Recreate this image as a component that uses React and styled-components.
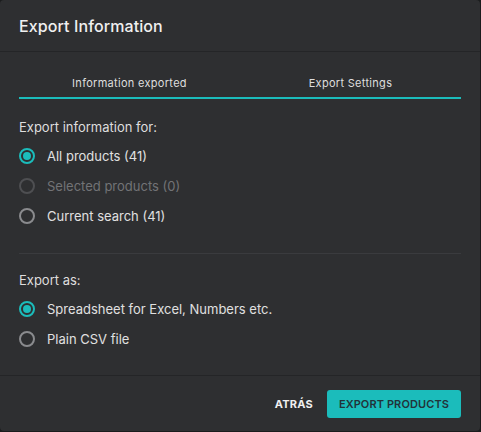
import React, { useState } from "react";
import styled, { createGlobalStyle } from "styled-components";

const GlobalStyle = createGlobalStyle`
	html, body {
		margin: 0;
		padding: 0;
		background: #1b1c1d;
	}
	* {
		box-sizing: border-box;
	}
`;

const Dialog = styled.div`
	width: 480px;
	height: 431px;
	background: #2e2f31;
	border-radius: 4px;
	font-family: Inter, "Noto Sans", sans-serif;
	color: #dedede;
	display: flex;
	flex-direction: column;
`;

const Header = styled.div`
	height: 52px;
	padding: 0 19px;
	display: flex;
	align-items: center;
	border-bottom: 1px solid #242527;
`;

const Title = styled.h2`
	margin: 0;
	font-size: 16px;
	font-weight: 500;
	color: #f0f0f0;
	letter-spacing: 0.1px;
	padding-top: 1px;
`;

const Body = styled.div`
	flex: 1;
	padding: 17px 19px 0;
	border-bottom: 1px solid #242527;
`;

const Tabs = styled.div`
	display: grid;
	grid-template-columns: 1fr 1fr;
	border-bottom: 2px solid #1bbcbb;
`;

const Tab = styled.button`
	background: none;
	border: 0;
	padding: 0;
	height: 28px;
	font-family: inherit;
	font-size: 11px;
	color: #dedede;
	cursor: pointer;
	letter-spacing: 0.3px;
`;

const Section = styled.div`
	padding: ${(p) => (p.$first ? "20px 0 22px" : "18px 0 0")};
	border-bottom: ${(p) => (p.$first ? "1px solid #3a3b3e" : "0")};
`;

const Label = styled.div`
	font-size: 13px;
	color: #dedede;
	margin-bottom: 6px;
`;

const Option = styled.label`
	display: flex;
	align-items: center;
	gap: 12px;
	height: 30px;
	font-size: 13px;
	color: ${(p) => (p.$disabled ? "#727376" : "#e0e0e0")};
	cursor: ${(p) => (p.$disabled ? "default" : "pointer")};
`;

const Radio = styled.span`
	width: 16px;
	height: 16px;
	border-radius: 50%;
	border: 2px solid
		${(p) => (p.$checked ? "#1bbcbb" : p.$disabled ? "#4e4f52" : "#8a8b8e")};
	display: flex;
	align-items: center;
	justify-content: center;
	&::after {
		content: "";
		width: 8px;
		height: 8px;
		border-radius: 50%;
		background: ${(p) => (p.$checked ? "#1bbcbb" : "transparent")};
	}
`;

const Footer = styled.div`
	height: 55px;
	padding: 0 19px;
	display: flex;
	align-items: center;
	justify-content: flex-end;
	gap: 14px;
`;

const TextButton = styled.button`
	background: none;
	border: 0;
	font-family: inherit;
	font-size: 11px;
	font-weight: 700;
	color: #f0f0f0;
	padding: 0;
	cursor: pointer;
	letter-spacing: 0.2px;
`;

const PrimaryButton = styled.button`
	background: #1bbcbb;
	border: 0;
	border-radius: 3px;
	height: 28px;
	padding: 0 12px;
	font-family: inherit;
	font-size: 11px;
	font-weight: 600;
	color: #22333a;
	cursor: pointer;
	letter-spacing: 0.1px;
`;

const RadioOption = ({ label, checked, disabled, onClick }) => (
	<Option $disabled={disabled} onClick={disabled ? undefined : onClick}>
		<Radio $checked={checked} $disabled={disabled} />
		{label}
	</Option>
);

const App = () => {
	const [scope, setScope] = useState("all");
	const [format, setFormat] = useState("sheet");

	return (
		<>
			<GlobalStyle />
			<Dialog>
				<Header>
					<Title>Export Information</Title>
				</Header>
				<Body>
					<Tabs>
						<Tab>Information exported</Tab>
						<Tab>Export Settings</Tab>
					</Tabs>
					<Section $first>
						<Label>Export information for:</Label>
						<RadioOption
							label="All products (41)"
							checked={scope === "all"}
							onClick={() => setScope("all")}
						/>
						<RadioOption label="Selected products (0)" disabled />
						<RadioOption
							label="Current search (41)"
							checked={scope === "search"}
							onClick={() => setScope("search")}
						/>
					</Section>
					<Section>
						<Label>Export as:</Label>
						<RadioOption
							label="Spreadsheet for Excel, Numbers etc."
							checked={format === "sheet"}
							onClick={() => setFormat("sheet")}
						/>
						<RadioOption
							label="Plain CSV file"
							checked={format === "csv"}
							onClick={() => setFormat("csv")}
						/>
					</Section>
				</Body>
				<Footer>
					<TextButton>ATRÁS</TextButton>
					<PrimaryButton>EXPORT PRODUCTS</PrimaryButton>
				</Footer>
			</Dialog>
		</>
	);
};

export default App;
